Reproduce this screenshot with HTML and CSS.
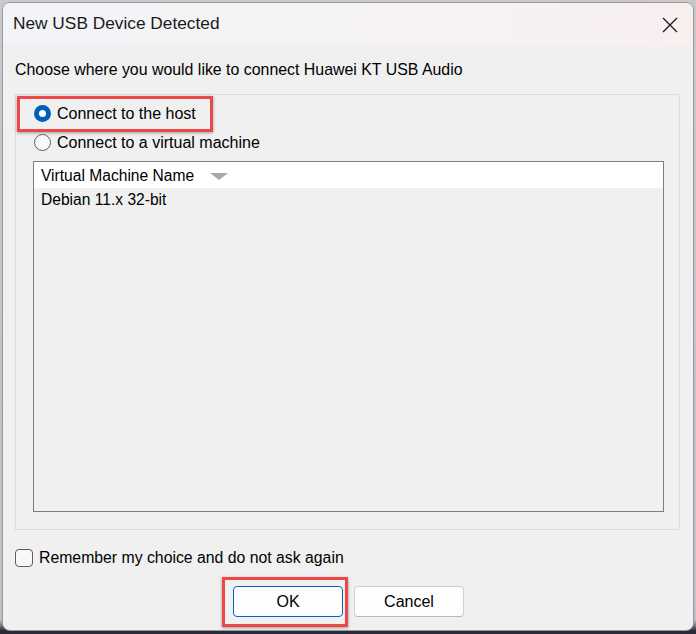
FILE: index.html
```html
<!DOCTYPE html>
<html>
<head>
<meta charset="utf-8">
<link rel="stylesheet" href="styles.css">
</head>
<body>
<div class="desk">
  <div class="win">
    <div class="titlebar">
      <span class="title">New USB Device Detected</span>
      <svg class="close" width="16" height="16" viewBox="0 0 16 16"><path d="M1 1 L15 15 M15 1 L1 15" stroke="#1a1a1a" stroke-width="1.3" fill="none"/></svg>
    </div>
    <div class="content">
      <div class="prompt">Choose where you would like to connect Huawei KT USB Audio</div>
      <div class="group">
        <div class="opt sel">
          <span class="radio on"></span><span>Connect to the host</span>
          <span class="hl"></span>
        </div>
        <div class="opt">
          <span class="radio"></span><span>Connect to a virtual machine</span>
        </div>
        <div class="list">
          <div class="lhead"><span>Virtual Machine Name</span><span class="tri"></span></div>
          <div class="lrow">Debian 11.x 32-bit</div>
        </div>
      </div>
      <div class="remember"><span class="check"></span><span>Remember my choice and do not ask again</span></div>
      <div class="buttons">
        <div class="btnwrap"><button class="btn ok">OK</button><span class="hl2"></span></div>
        <button class="btn">Cancel</button>
      </div>
    </div>
  </div>
</div>
</body>
</html>
```
FILE: styles.css
```css
html, body { margin: 0; padding: 0; }
body {
  width: 696px; height: 634px; overflow: hidden;
  background: linear-gradient(180deg, #c9c9cc 0, #bfbfc3 620px, #2b2a3a 631px);
  font-family: "Liberation Sans", Arial, sans-serif;
  color: #000;
}
.desk { padding: 2px 2px 0 2px; }
.win {
  width: 690px; height: 627px;
  border: 1px solid #9a9a9a;
  border-radius: 8px;
  background: #f0f0f0;
  overflow: hidden;
  display: flex; flex-direction: column;
}
.titlebar {
  height: 42px; flex: none;
  background: linear-gradient(90deg, #f3f4f8 0%, #f6f2f4 60%, #f8efef 100%);
  display: flex; align-items: center; justify-content: space-between;
  padding: 0 15px 0 10px;
}
.title { font-size: 17.3px; color: #1a1a1a; position: relative; top: -1px; }
.close { margin-top: 2px; }
.content { padding: 14px 0 0 12px; display: flex; flex-direction: column; }
.prompt { font-size: 15.9px; line-height: 22px; height: 22px; }
.group {
  margin-top: 13px;
  width: 665px; height: 436px;
  border: 1px solid #dcdcdc;
  box-sizing: border-box;
  padding: 4px 0 0 18px;
}
.opt { display: flex; align-items: center; font-size: 16px; height: 29px; position: relative; gap: 6px; }
.radio {
  width: 17px; height: 17px; box-sizing: border-box;
  border: 1px solid #5d5d5d; border-radius: 50%; background: #f8f8f8;
}
.radio.on { border: 5px solid #005fb8; background: #fff; }
.hl {
  position: absolute; left: -17px; top: -3px;
  width: 196px; height: 36px; box-sizing: border-box;
  border: 3px solid #ee4747;
  box-shadow: 0 1px 3px rgba(0,0,0,0.35);
}
.list {
  margin-top: 4px; margin-left: -1px;
  width: 631px; height: 351px; box-sizing: border-box;
  border: 1px solid #7c7c84;
  background: #f0f0f0;
}
.lhead {
  background: #fff; height: 26px;
  display: flex; align-items: center; gap: 16px;
  padding-left: 7px; padding-top: 1px; box-sizing: border-box; font-size: 15.6px;
}
.tri {
  width: 0; height: 0;
  border-left: 9px solid transparent; border-right: 9px solid transparent;
  border-top: 7px solid #a9a9a9; margin-top: 1px;
}
.lrow { padding-left: 7px; font-size: 15.6px; line-height: 24px; }
.remember { display: flex; align-items: center; gap: 6px; margin-top: 18px; font-size: 15.8px; height: 20px; }
.check {
  width: 18px; height: 18px; box-sizing: border-box;
  border: 1px solid #5d5d5d; border-radius: 4px; background: #f8f8f8;
}
.buttons { display: flex; gap: 11px; margin-top: 18px; padding-left: 218px; }
.btnwrap { position: relative; }
.btn {
  width: 110px; height: 31px; box-sizing: border-box;
  font-family: inherit; font-size: 16px; color: #000;
  background: #fdfdfd; border: 1px solid #d0d0d0; border-bottom-color: #b8b8b8;
  border-radius: 4px; padding: 0;
}
.btn.ok { border: 1px solid #0067c0; }
.hl2 {
  position: absolute; left: -11px; top: -9px;
  width: 126px; height: 50px; box-sizing: border-box;
  border: 3px solid #ee4747;
  box-shadow: 0 1px 3px rgba(0,0,0,0.35);
}
```
